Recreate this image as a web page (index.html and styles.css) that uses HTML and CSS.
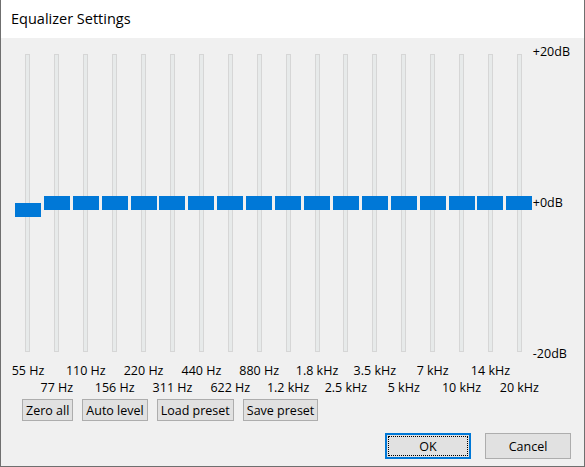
FILE: index.html
```html
<!DOCTYPE html>
<html>
<head>
<meta charset="utf-8">
<link rel="stylesheet" href="styles.css">
</head>
<body>
<div class="window">
  <div class="titlebar">Equalizer Settings</div>
  <div class="client">
    <div class="eq-row">
      <div class="bands">
        <div class="band"><div class="track"></div><div class="thumb" style="top:159px"></div></div>
        <div class="band"><div class="track"></div><div class="thumb" style="top:152px"></div></div>
        <div class="band"><div class="track"></div><div class="thumb" style="top:152px"></div></div>
        <div class="band"><div class="track"></div><div class="thumb" style="top:152px"></div></div>
        <div class="band"><div class="track"></div><div class="thumb" style="top:152px"></div></div>
        <div class="band"><div class="track"></div><div class="thumb" style="top:152px"></div></div>
        <div class="band"><div class="track"></div><div class="thumb" style="top:152px"></div></div>
        <div class="band"><div class="track"></div><div class="thumb" style="top:152px"></div></div>
        <div class="band"><div class="track"></div><div class="thumb" style="top:152px"></div></div>
        <div class="band"><div class="track"></div><div class="thumb" style="top:152px"></div></div>
        <div class="band"><div class="track"></div><div class="thumb" style="top:152px"></div></div>
        <div class="band"><div class="track"></div><div class="thumb" style="top:152px"></div></div>
        <div class="band"><div class="track"></div><div class="thumb" style="top:152px"></div></div>
        <div class="band"><div class="track"></div><div class="thumb" style="top:152px"></div></div>
        <div class="band"><div class="track"></div><div class="thumb" style="top:152px"></div></div>
        <div class="band"><div class="track"></div><div class="thumb" style="top:152px"></div></div>
        <div class="band"><div class="track"></div><div class="thumb" style="top:152px"></div></div>
        <div class="band"><div class="track"></div><div class="thumb" style="top:152px"></div></div>
      </div>
      <div class="scale">
        <span>+20dB</span>
        <span>+0dB</span>
        <span>-20dB</span>
      </div>
    </div>
    <div class="freqs">
      <div class="freq hi"><span>55 Hz</span></div>
      <div class="freq lo"><span>77 Hz</span></div>
      <div class="freq hi"><span>110 Hz</span></div>
      <div class="freq lo"><span>156 Hz</span></div>
      <div class="freq hi"><span>220 Hz</span></div>
      <div class="freq lo"><span>311 Hz</span></div>
      <div class="freq hi"><span>440 Hz</span></div>
      <div class="freq lo"><span>622 Hz</span></div>
      <div class="freq hi"><span>880 Hz</span></div>
      <div class="freq lo"><span>1.2 kHz</span></div>
      <div class="freq hi"><span>1.8 kHz</span></div>
      <div class="freq lo"><span>2.5 kHz</span></div>
      <div class="freq hi"><span>3.5 kHz</span></div>
      <div class="freq lo"><span>5 kHz</span></div>
      <div class="freq hi"><span>7 kHz</span></div>
      <div class="freq lo"><span>10 kHz</span></div>
      <div class="freq hi"><span>14 kHz</span></div>
      <div class="freq lo"><span>20 kHz</span></div>
    </div>
    <div class="tools">
      <button class="btn">Zero all</button>
      <button class="btn">Auto level</button>
      <button class="btn">Load preset</button>
      <button class="btn">Save preset</button>
    </div>
    <div class="actions">
      <button class="dbtn default"><span class="focus">OK</span></button>
      <button class="dbtn">Cancel</button>
    </div>
  </div>
</div>
</body>
</html>
```
FILE: styles.css
```css
html, body {
  margin: 0;
  padding: 0;
  background: #ffffff;
}
body {
  font-family: "Open Sans", "Noto Sans", "Liberation Sans", sans-serif;
  font-size: 12.5px;
  color: #000;
}
.window {
  width: 585px;
  height: 467px;
  box-sizing: border-box;
  border-left: 1px solid #6f6f6f;
  border-right: 1px solid #6f6f6f;
  border-bottom: 1px solid #6f6f6f;
  display: flex;
  flex-direction: column;
}
.titlebar {
  height: 38px;
  background: #fff;
  font-size: 14.5px;
  line-height: 38px;
  padding-left: 10px;
  box-sizing: border-box;
}
.client {
  flex: 1;
  background: #f0f0f0;
  padding-top: 6px;
  display: flex;
  flex-direction: column;
}
.eq-row {
  display: flex;
  height: 318px;
  margin-left: 12.5px;
}
.bands {
  display: grid;
  grid-template-columns: repeat(18, 28.92px);
}
.band {
  position: relative;
  display: flex;
  justify-content: center;
  padding: 10px 0;
}
.track {
  width: 5px;
  box-sizing: border-box;
  border: 1px solid #d6d6d6;
  background: #e7eaea;
}
.thumb {
  position: absolute;
  left: 1.46px;
  width: 26px;
  height: 14px;
  background: #0078d7;
}
.scale {
  display: flex;
  flex-direction: column;
  justify-content: space-between;
  margin-left: -1px;
  line-height: 16px;
}
.freqs {
  display: grid;
  grid-template-columns: repeat(18, 28.92px);
  height: 34px;
  margin-left: 12.5px;
  line-height: 17px;
}
.freq {
  display: flex;
  justify-content: center;
  white-space: nowrap;
}
.freq.hi { align-items: flex-start; }
.freq.lo { align-items: flex-end; }
.tools {
  display: flex;
  gap: 9px;
  margin: 3px 0 0 21px;
}
.btn {
  font: inherit;
  height: 22px;
  border: 1px solid #adadad;
  background: #e1e1e1;
  padding: 0 3px;
  color: #000;
}
.actions {
  display: flex;
  justify-content: flex-end;
  gap: 14px;
  margin-top: 12px;
  padding-right: 13px;
}
.dbtn {
  font: inherit;
  width: 86px;
  height: 26px;
  border: 1px solid #adadad;
  background: #e1e1e1;
  padding: 0;
  color: #000;
  box-sizing: border-box;
}
.dbtn.default {
  border: 2px solid #0078d7;
  padding: 1px;
  display: flex;
}
.focus {
  flex: 1;
  border: 1px dotted #000;
  display: flex;
  align-items: center;
  justify-content: center;
}
```
